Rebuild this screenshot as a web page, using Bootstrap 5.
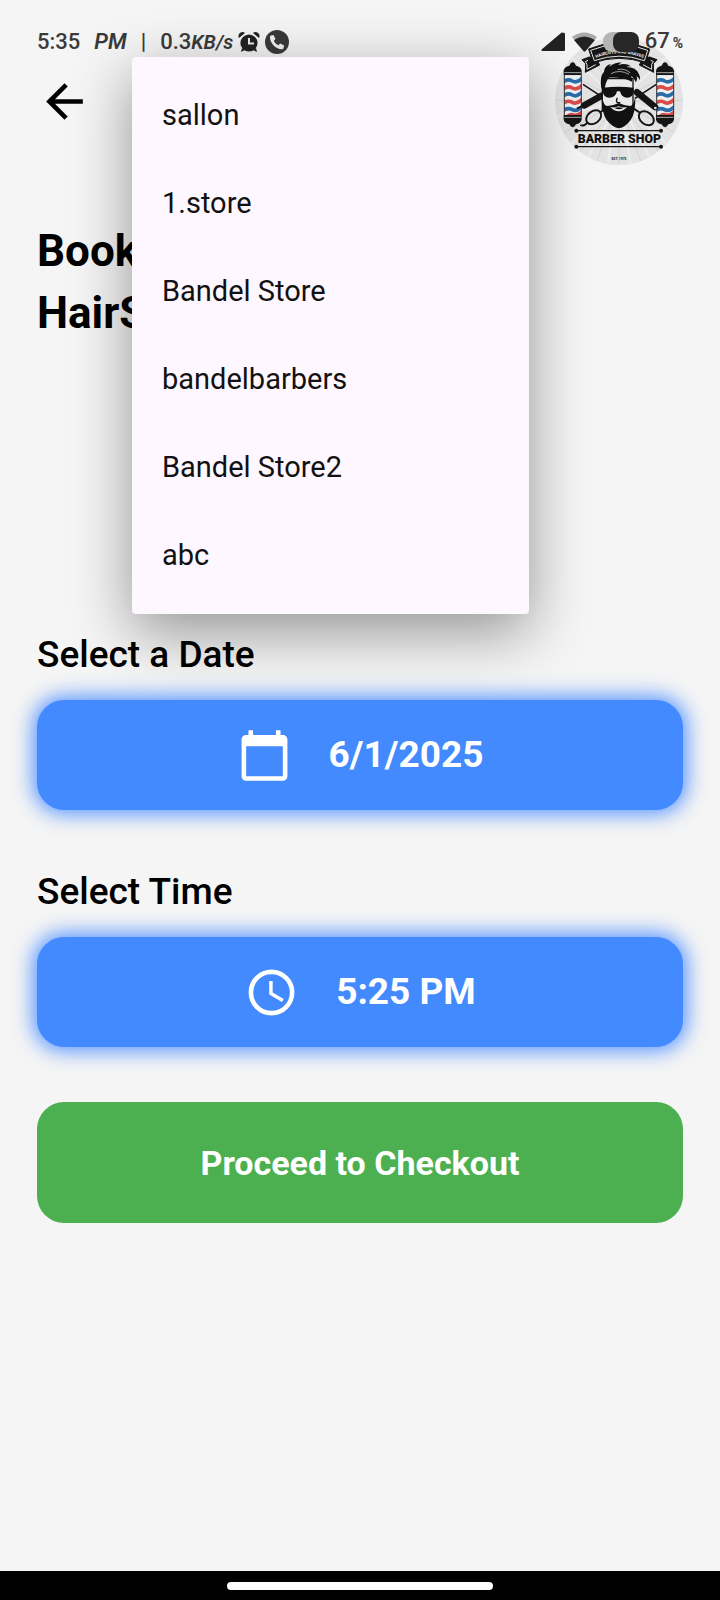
<!DOCTYPE html>
<html lang="en">
<head>
<meta charset="utf-8">
<meta name="viewport" content="width=device-width, initial-scale=1">
<title>Book</title>
<link href="https://cdn.jsdelivr.net/npm/bootstrap@5.3.0/dist/css/bootstrap.min.css" rel="stylesheet">
<style>
  body { background: #f5f5f5; color: #000; font-family: Roboto, "Liberation Sans", sans-serif; }
  .gutter { padding-left: 37px; padding-right: 37px; }
  .status { height: 28px; top: 28px; z-index: 1010; font-size: 22px; line-height: 28px; font-weight: 500; color: #3a3a3a; pointer-events: none; }
  .status .script { font-style: italic; font-weight: 600; }
  .status .unit { font-size: 20px; }
  .status .pct { font-size: 14px; font-weight: 700; }
  .gap-a { gap: 14px; }
  .gap-b { gap: 5px; }
  .gap-c { gap: 3px; }
  .app-head { padding-top: 37px; }
  .back { width: 55px; height: 55px; }
  .logo { width: 128px; height: 128px; }
  .page-title { margin: 55px 0 0; min-height: 413px; font-size: 44px; line-height: 62px; font-weight: 700; }
  .field-label { font-size: 37px; line-height: 44px; font-weight: 500; margin-bottom: 23px; }
  .pick { height: 110px; gap: 37px; border-radius: 27px; background: #448aff; color: #fff; font-size: 37px; line-height: 44px; font-weight: 700; box-shadow: 0 0 20px 4px rgba(68,138,255,.9); }
  .pick:hover, .pick:active { background: #2f7bf5 !important; color: #fff !important; }
  .date-pick { margin-bottom: 60px; }
  .time-pick { margin-bottom: 55px; }
  .checkout { height: 121px; border-radius: 27px; background: #4caf50; color: #fff; font-size: 34px; line-height: 40px; font-weight: 700; }
  .checkout:hover { background: #439f47; color: #fff; }
  .stores { top: 57px; left: 132px; right: 191px; padding: 14px 0 15px; border: 0; border-radius: 4px; background: #fef7ff; box-shadow: 0 18px 60px rgba(0,0,0,.4); z-index: 1020; }
  .stores .dropdown-item { height: 88px; padding: 0 30px; font-size: 29px; line-height: 40px; color: #111; }
  .sysnav { height: 29px; background: #000; }
  .pill { width: 37%; height: 8px; background: #fff; }
</style>
</head>
<body class="d-flex flex-column min-vh-100 position-relative">

<div class="status gutter position-absolute start-0 end-0 d-flex justify-content-between align-items-center">
  <div class="d-flex align-items-center gap-b">
    <div class="d-flex gap-a">
      <span>5:35</span><span class="script">PM</span><span>|</span>
      <span>0.3<span class="script unit">KB/s</span></span>
    </div>
    <svg width="22" height="22" viewBox="0 0 22 22" aria-hidden="true"><g fill="#222"><circle cx="11" cy="12" r="8.600"/><path d="M1 7a4 4 0 0 1 6-5zM21 7a4 4 0 0 0-6-5zM4 17l-1 4 4-2zM18 17l1 4-4-2z"/></g><path d="M11 7v5.500h5" fill="none" stroke="#eee" stroke-width="2"/></svg>
    <svg width="24" height="24" viewBox="0 0 24 24" aria-hidden="true"><circle cx="12" cy="12" r="12" fill="#3a3a3a"/><path fill="#f2f2f2" d="M6 5.500 8.500 5l2 4-1.700 1.700c1 2.200 2.500 3.600 4.600 4.600l1.700-1.800 4 2-.6 2.700c-.3.800-1 1-1.800 1C10.500 19 5 13 5 7.200c0-.9.300-1.400 1-1.700z"/></svg>
  </div>
  <div class="d-flex align-items-center gap-b">
    <svg width="26" height="20" viewBox="0 0 26 20" aria-hidden="true"><path d="M24 2v16H2.500L22 1.500z" fill="#222" stroke="#222" stroke-width="2" stroke-linejoin="round"/></svg>
    <svg width="27" height="20" viewBox="0 0 27 20" aria-hidden="true"><path d="M1 5Q13 -4 26 5L14.500 19q-1 1-2 0z" fill="#aaa"/><path d="M3 8Q13 1 24 8L14.500 19q-1 1-2 0z" fill="#222"/></svg>
    <svg width="37" height="22" viewBox="0 0 37 22" aria-hidden="true"><rect x="0" y="1" width="32" height="20" rx="9" fill="#b5b5b5"/><rect x="10" y="1" width="26" height="20" rx="8" fill="#272727"/></svg>
    <span class="d-flex align-items-baseline gap-c">67<span class="pct">%</span></span>
  </div>
</div>

<header class="app-head gutter d-flex justify-content-between align-items-center">
  <button type="button" class="btn back border-0 p-0" aria-label="Back">
    <svg class="d-block" width="55" height="55" viewBox="0 0 24 24" aria-hidden="true"><path d="M20 11H7.830l5.590-5.590L12 4l-8 8 8 8 1.410-1.410L7.830 13H20z"/></svg>
  </button>
  <svg class="logo" viewBox="106 80 384 384" role="img" aria-label="Barber Shop">
    <defs>
      <clipPath id="disc"><circle cx="298" cy="272" r="191"/></clipPath>
      <clipPath id="tube"><rect x="134" y="196" width="51" height="118"/></clipPath>
      <g id="pole">
        <rect x="134" y="196" width="51" height="118" fill="#eef1f3"/>
        <g clip-path="url(#tube)" fill="none" stroke-width="11">
          <path stroke="#2a6da8" d="M128 216q16-12 30-4t32-10M128 258q16-12 30-4t32-12M128 302q16-12 30-4t32-12"/>
          <path stroke="#dc4b48" d="M128 237q16-12 30-4t32-10M128 280q16-12 30-4t32-12M140 322q10-12 22-8t28-12"/>
        </g>
        <path fill="none" stroke="#333" stroke-width="3" d="M134 194v122M185 194v122"/>
        <path fill="#151515" d="M132 194v-13q2-12 17-15l4-7q6-6 12 0l4 7q15 3 17 15v13zM132 314v14q3 11 17 14l4 6q6 5 12 0l4-6q14-3 17-14v-14z"/>
        <path stroke="#aaa" stroke-width="3" d="M134 187h50M134 321h50"/>
      </g>
      <path id="arc" d="M222 146Q298 112 378 146"/>
    </defs>
    <circle cx="298" cy="272" r="192" fill="#e3e3e3"/>
    <g clip-path="url(#disc)" stroke="#d2d2d2" stroke-width="3">
      <path d="M298 272 106 270M298 272 130 370M298 272 170 440M298 272 225 470M298 272 298 470M298 272 370 470M298 272 430 440M298 272 470 370M298 272 490 270M298 272 470 180M298 272 400 110M298 272 200 110M298 272 130 180"/>
      <path stroke="#ededed" stroke-width="6" d="M298 272 110 320M298 272 145 410M298 272 195 460M298 272 262 470M298 272 335 470M298 272 402 460M298 272 452 410M298 272 490 320M298 272 440 140M298 272 155 140"/>
    </g>
    <use href="#pole"/><use href="#pole" x="277"/>
    <!-- scissors and razor crossed behind the head -->
    <g fill="none" stroke="#151515">
      <path stroke-width="5" d="M190 222l64 42M410 222l-64 42"/>
      <path stroke-width="20" stroke-linecap="round" d="M246 256l-52 29M352 246l54 44"/>
      <path stroke-width="6" d="M172 294l20-8"/>
      <ellipse cx="222" cy="321" rx="25" ry="18" stroke-width="6" transform="rotate(-38 222 321)"/>
      <ellipse cx="380" cy="324" rx="25" ry="18" stroke-width="6" transform="rotate(38 380 324)"/>
      <path stroke-width="6" d="M242 306l18-14M362 308l-24-16M204 336q-12 14-22 8"/>
    </g>
    <circle cx="407" cy="293" r="4" fill="#ddd"/>
    <!-- face -->
    <path fill="#e9e9e9" stroke="#151515" stroke-width="4" d="M248 205h92v92l-44 44-48-44z"/>
    <path fill="#111" d="M245 234q-6-36 8-50 3-21 22-23-5 4-6 8 19-14 37-12-8 3-10 7 22-8 38 4-9-1-14 2 30 0 38 22 6 10 2 18-2-8-9-13 4 10-2 19-5-14-15-20 5 10 3 18-30-14-70-12-9 12-12 34z"/>
    <path stroke="#e9e9e9" stroke-width="2" fill="none" d="M274 190q26-14 54 2M294 178q20-6 38 10"/>
    <path fill="#111" d="M250 232q46-5 92 0v10q-2 20-19 20-18 0-22-19h-9q-4 19-23 19-18 0-20-20z"/>
    <path fill="none" stroke="#111" stroke-width="4" d="M293 262q-6 14 2 15h7"/>
    <path fill="#111" d="M246 256q6 31 17 31 20-2 34-9 16 7 34 9 12-1 16-31 1 53-14 73-16 22-35 25-20-3-37-25-15-20-15-73z"/>
    <path fill="#e9e9e9" d="M272 290q13 3 25-2 13 5 25 2-12 13-25 13t-25-13z"/>
    <path fill="#111" d="M284 293q13-5 27 0-12 8-27 0z"/>
    <!-- ribbon -->
    <g fill="#151515" stroke="#151515" stroke-width="3" stroke-linejoin="round">
      <path d="M209 140l-22 8 11 12-1 26 43-22-10-20zM390 140l22 8-11 12 1 26-43-22 10-20z"/>
      <path d="M207 116Q298 78 390 116L378 158Q298 130 220 158z"/>
    </g>
    <path fill="none" stroke="#e6e6e6" stroke-width="3" d="M213 120Q298 84 384 120L374 151Q298 124 224 151zM205 150l-8 4 5 8v15l26-14M393 150l8 4-5 8v15l-26-14"/>
    <text font-family="Roboto, sans-serif" font-size="13" font-weight="700" fill="#f0f0f0"><textPath href="#arc" startOffset="50%" text-anchor="middle">HAIRCUTS AND SHAVES</textPath></text>
    <g stroke="#151515" stroke-width="4" fill="#151515"><path d="M172 361h252M172 409h252"/><g stroke="none"><circle cx="170" cy="361" r="6"/><circle cx="424" cy="361" r="6"/><circle cx="170" cy="409" r="6"/><circle cx="424" cy="409" r="6"/></g></g>
    <text x="299" y="399" text-anchor="middle" font-family="Roboto, sans-serif" font-size="37" font-weight="900" fill="#111">BARBER SHOP</text>
    <text x="298" y="448" text-anchor="middle" font-family="Roboto, sans-serif" font-size="10" font-weight="700" fill="#222">EST. 1975</text>
  </svg>
</header>

<main class="gutter flex-grow-1">
  <h1 class="page-title">Book<br>HairS</h1>

  <label class="field-label d-block" for="date">Select a Date</label>
  <button type="button" id="date" class="btn pick date-pick border-0 w-100 d-flex justify-content-center align-items-center">
    <svg width="55" height="55" viewBox="0 0 24 24" fill="currentColor" aria-hidden="true"><path d="M20 3h-1V1h-2v2H7V1H5v2H4c-1.100 0-2 .9-2 2v16c0 1.100.9 2 2 2h16c1.100 0 2-.9 2-2V5c0-1.100-.9-2-2-2zm0 18H4V8h16v13z"/></svg>
    <span>6/1/2025</span>
  </button>

  <label class="field-label d-block" for="time">Select Time</label>
  <button type="button" id="time" class="btn pick time-pick border-0 w-100 d-flex justify-content-center align-items-center">
    <svg width="55" height="55" viewBox="0 0 24 24" fill="none" stroke="currentColor" aria-hidden="true"><circle cx="12" cy="12" r="9" stroke-width="2"/><path stroke-width="1.500" d="M11.750 7v5.400l5.200 3.100"/></svg>
    <span>5:25 PM</span>
  </button>

  <button type="button" class="btn checkout border-0 w-100">Proceed to Checkout</button>
</main>

<ul class="dropdown-menu stores show m-0" aria-label="Stores">
  <li><button type="button" class="dropdown-item d-flex align-items-center">sallon</button></li>
  <li><button type="button" class="dropdown-item d-flex align-items-center">1.store</button></li>
  <li><button type="button" class="dropdown-item d-flex align-items-center">Bandel Store</button></li>
  <li><button type="button" class="dropdown-item d-flex align-items-center">bandelbarbers</button></li>
  <li><button type="button" class="dropdown-item d-flex align-items-center">Bandel Store2</button></li>
  <li><button type="button" class="dropdown-item d-flex align-items-center">abc</button></li>
</ul>

<footer class="sysnav d-flex justify-content-center align-items-center">
  <div class="pill rounded-pill"></div>
</footer>

<script src="https://cdn.jsdelivr.net/npm/bootstrap@5.3.0/dist/js/bootstrap.bundle.min.js"></script>
</body>
</html>
